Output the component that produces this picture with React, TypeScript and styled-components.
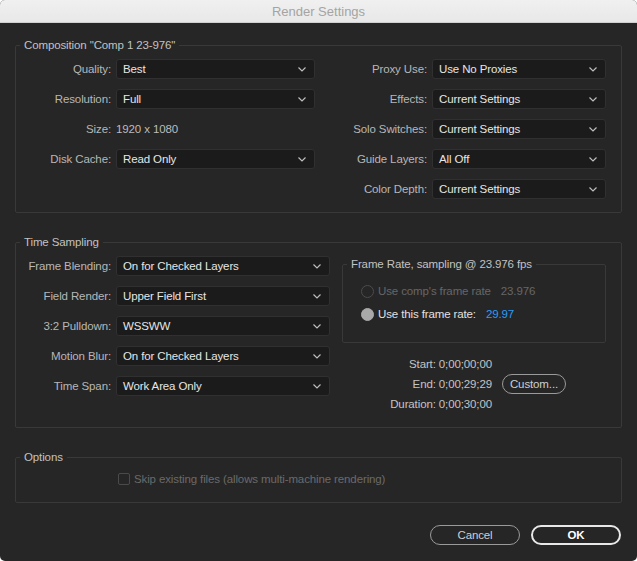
import styled, { createGlobalStyle } from 'styled-components'

const GlobalStyle = createGlobalStyle`
    html, body {
        margin: 0;
        padding: 0;
        background: #ffffff;
    }
    body {
        font-family: "Liberation Sans", Arial, sans-serif;
        font-size: 11.5px;
        letter-spacing: -0.12px;
    }
`

const Window = styled.div`
    width: 637px;
    height: 561px;
    display: flex;
    flex-direction: column;
    background: #262626;
    border-radius: 5px;
    overflow: hidden;
`

const TitleBar = styled.div`
    flex: none;
    height: 22px;
    display: flex;
    align-items: center;
    justify-content: center;
    background: linear-gradient(#f0f0f0, #e8e8e8);
    border-bottom: 1px solid #d0d0d0;
    color: #a4a4a4;
    font-size: 13px;
    letter-spacing: 0;
`

const Body = styled.div`
    flex: 1;
    display: flex;
    flex-direction: column;
    gap: 22px;
    padding: 15px 15px 14px 15px;
`

const Group = styled.fieldset<{ $bottom?: number }>`
    margin: 0;
    min-width: 0;
    padding: 7px 15px ${p => p.$bottom ?? 13}px 0;
    border: 1px solid #393939;
    border-radius: 2px;
    display: flex;
    align-items: flex-start;
`

const Legend = styled.legend<{ $height?: number }>`
    margin-left: 4px;
    padding: 0 4px;
    line-height: ${p => p.$height ?? 14}px;
    color: #c2c2c2;
`

const FieldGrid = styled.div<{ $label: number; $field: number; $offset?: number }>`
    display: grid;
    grid-template-columns: ${p => p.$label}px ${p => p.$field}px;
    grid-auto-rows: 20px;
    row-gap: 10px;
    column-gap: 5px;
    align-items: center;
    margin-left: ${p => p.$offset ?? 0}px;
`

const Label = styled.span`
    text-align: right;
    color: #b7b7b7;
    white-space: nowrap;
`

const StaticValue = styled.span`
    color: #bcbcbc;
`

const Select = styled.div`
    height: 20px;
    box-sizing: border-box;
    display: flex;
    align-items: center;
    justify-content: space-between;
    padding: 0 8px 0 6px;
    background: #1b1b1b;
    border: 1px solid #303030;
    border-radius: 3px;
    color: #e6e6e6;
    white-space: nowrap;
`

const RightColumn = styled.div`
    flex: 1;
    margin-left: 12px;
    display: flex;
    flex-direction: column;
`

const FrameRateBox = styled.fieldset`
    margin: 0;
    min-width: 0;
    padding: 11px 0 20px 0;
    border: 1px solid #393939;
    border-radius: 2px;
    display: flex;
    flex-direction: column;
    gap: 7px;
`

const RadioRow = styled.div<{ $disabled?: boolean }>`
    height: 16px;
    padding-left: 18px;
    display: flex;
    align-items: center;
    color: ${p => (p.$disabled ? '#666666' : '#e2e2e2')};
`

const Radio = styled.span<{ $checked?: boolean }>`
    width: 13px;
    height: 13px;
    box-sizing: border-box;
    border-radius: 50%;
    margin-right: 4px;
    border: 1px solid ${p => (p.$checked ? '#a9a9a9' : '#4c4c4c')};
    background: ${p => (p.$checked ? '#a9a9a9' : 'transparent')};
`

const RateValue = styled.span<{ $blue?: boolean; $gap: number }>`
    margin-left: ${p => p.$gap}px;
    color: ${p => (p.$blue ? '#2d9cf5' : '#666666')};
`

const TimeGrid = styled.div`
    margin-top: 11px;
    display: grid;
    grid-template-columns: 150px auto;
    grid-auto-rows: 20px;
    column-gap: 10px;
    align-items: center;
`

const TimeText = styled.span`
    grid-column: 1;
    text-align: right;
    color: #c4c4c4;
    white-space: nowrap;
`

const PillButton = styled.button<{ $primary?: boolean; $width: number }>`
    width: ${p => p.$width}px;
    height: 20px;
    padding: 0;
    background: transparent;
    border: ${p => (p.$primary ? '2px solid #e8e8e8' : '1px solid #9a9a9a')};
    border-radius: 10px;
    color: ${p => (p.$primary ? '#ffffff' : '#cfcfcf')};
    font-family: inherit;
    font-size: 11.5px;
    letter-spacing: inherit;
    font-weight: ${p => (p.$primary ? 'bold' : 'normal')};
`

const CheckRow = styled.div`
    height: 16px;
    margin-left: 102px;
    display: flex;
    align-items: center;
    gap: 4px;
    color: #6a6a6a;
`

const CheckBox = styled.span`
    width: 12px;
    height: 12px;
    box-sizing: border-box;
    border: 1px solid #4a4a4a;
    border-radius: 2px;
`

const Footer = styled.div`
    display: flex;
    justify-content: flex-end;
    gap: 11px;
    padding-right: 1px;
`

function Chevron() {
    return (
        <svg width="8" height="5" viewBox="0 0 8 5">
            <path d="M0.5 0.5 L4 4 L7.5 0.5" fill="none" stroke="#bdbdbd" strokeWidth="1.2" />
        </svg>
    )
}

interface Field {
    label: string
    value: string
    plain?: boolean
}

function Fields({ fields }: { fields: Field[] }) {
    return (
        <>
            {fields.map(f => [
                <Label key={`l-${f.label}`}>{f.label}</Label>,
                f.plain ? (
                    <StaticValue key={`v-${f.label}`}>{f.value}</StaticValue>
                ) : (
                    <Select key={`v-${f.label}`}>
                        <span>{f.value}</span>
                        <Chevron />
                    </Select>
                ),
            ])}
        </>
    )
}

const compLeft: Field[] = [
    { label: 'Quality:', value: 'Best' },
    { label: 'Resolution:', value: 'Full' },
    { label: 'Size:', value: '1920 x 1080', plain: true },
    { label: 'Disk Cache:', value: 'Read Only' },
]

const compRight: Field[] = [
    { label: 'Proxy Use:', value: 'Use No Proxies' },
    { label: 'Effects:', value: 'Current Settings' },
    { label: 'Solo Switches:', value: 'Current Settings' },
    { label: 'Guide Layers:', value: 'All Off' },
    { label: 'Color Depth:', value: 'Current Settings' },
]

const timeFields: Field[] = [
    { label: 'Frame Blending:', value: 'On for Checked Layers' },
    { label: 'Field Render:', value: 'Upper Field First' },
    { label: '3:2 Pulldown:', value: 'WSSWW' },
    { label: 'Motion Blur:', value: 'On for Checked Layers' },
    { label: 'Time Span:', value: 'Work Area Only' },
]

export default function App() {
    return (
        <>
            <GlobalStyle />
            <Window>
                <TitleBar>Render Settings</TitleBar>
                <Body>
                    <Group>
                        <Legend>Composition "Comp 1 23-976"</Legend>
                        <FieldGrid $label={95} $field={199}>
                            <Fields fields={compLeft} />
                        </FieldGrid>
                        <FieldGrid $label={107} $field={174} $offset={5}>
                            <Fields fields={compRight} />
                        </FieldGrid>
                    </Group>

                    <Group>
                        <Legend>Time Sampling</Legend>
                        <FieldGrid $label={95} $field={214}>
                            <Fields fields={timeFields} />
                        </FieldGrid>
                        <RightColumn>
                            <FrameRateBox>
                                <Legend $height={16}>Frame Rate, sampling @ 23.976 fps</Legend>
                                <RadioRow $disabled>
                                    <Radio />
                                    Use comp's frame rate
                                    <RateValue $gap={10}>23.976</RateValue>
                                </RadioRow>
                                <RadioRow>
                                    <Radio $checked />
                                    Use this frame rate:
                                    <RateValue $blue $gap={10}>29.97</RateValue>
                                </RadioRow>
                            </FrameRateBox>
                            <TimeGrid>
                                <TimeText>Start: 0;00;00;00</TimeText>
                                <TimeText>End: 0;00;29;29</TimeText>
                                <PillButton $width={64}>Custom...</PillButton>
                                <TimeText>Duration: 0;00;30;00</TimeText>
                            </TimeGrid>
                        </RightColumn>
                    </Group>

                    <Group $bottom={15}>
                        <Legend>Options</Legend>
                        <CheckRow>
                            <CheckBox />
                            Skip existing files (allows multi-machine rendering)
                        </CheckRow>
                    </Group>

                    <Footer>
                        <PillButton $width={90}>Cancel</PillButton>
                        <PillButton $primary $width={90}>OK</PillButton>
                    </Footer>
                </Body>
            </Window>
        </>
    )
}
